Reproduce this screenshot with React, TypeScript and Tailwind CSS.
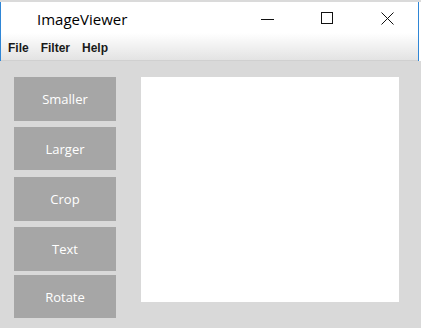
import React from "react";

const buttons: { label: string; h: string; mt: string }[] = [
  { label: "Smaller", h: "h-[44px]", mt: "mt-0" },
  { label: "Larger", h: "h-[43px]", mt: "mt-[6px]" },
  { label: "Crop", h: "h-[44px]", mt: "mt-[7px]" },
  { label: "Text", h: "h-[44px]", mt: "mt-[6px]" },
  { label: "Rotate", h: "h-[43px]", mt: "mt-[4px]" },
];

export default function App() {
  return (
    <div className="w-[421px] h-[328px] bg-[#d9d9d9] overflow-hidden flex flex-col">
      <div className="h-[2px] bg-[#dadada] shrink-0" />
      <div className="flex shrink-0 bg-white">
        <div className="w-[419px] border-x border-[#2f86d6] flex flex-col">
          <div className="h-[31px] bg-white flex items-center relative">
            <span
              className="pl-[36px] pt-[3px] text-[15px] text-black leading-none"
              style={{ fontFamily: '"Open Sans", sans-serif' }}
            >
              ImageViewer
            </span>
            <svg className="absolute left-[259px] top-[10px]" width="14" height="14" viewBox="0 0 14 14">
              <line x1="1" y1="7.5" x2="14" y2="7.5" stroke="#111" strokeWidth="1" />
            </svg>
            <svg className="absolute left-[319px] top-[9px]" width="14" height="14" viewBox="0 0 14 14">
              <rect x="1.5" y="1.5" width="11" height="11" fill="none" stroke="#111" strokeWidth="1" />
            </svg>
            <svg className="absolute left-[379px] top-[9px]" width="15" height="15" viewBox="0 0 15 15">
              <line x1="1.5" y1="1.5" x2="13.5" y2="13.5" stroke="#111" strokeWidth="1" />
              <line x1="13.5" y1="1.5" x2="1.5" y2="13.5" stroke="#111" strokeWidth="1" />
            </svg>
          </div>
          <div
            className="h-[28px] bg-gradient-to-b from-white to-[#e3e3e3] border-b border-[#d0d0d0] flex items-center pl-[7px] pt-[2px] gap-[12px] text-[12px] font-bold text-[#1a1a1a]"
            style={{ fontFamily: '"Liberation Sans", Arial, sans-serif' }}
          >
            <span>File</span>
            <span>Filter</span>
            <span>Help</span>
          </div>
        </div>
      </div>
      <div className="flex pl-[14px] pt-[16px]">
        <div className="w-[102px] flex flex-col">
          {buttons.map((b) => (
            <div
              key={b.label}
              className={`${b.h} ${b.mt} bg-[#a6a6a6] flex items-center justify-center pt-[2px] text-[13px] text-white`}
              style={{ fontFamily: '"Open Sans", sans-serif' }}
            >
              {b.label}
            </div>
          ))}
        </div>
        <div className="ml-[25px] w-[258px] h-[225px] bg-white" />
      </div>
    </div>
  );
}
